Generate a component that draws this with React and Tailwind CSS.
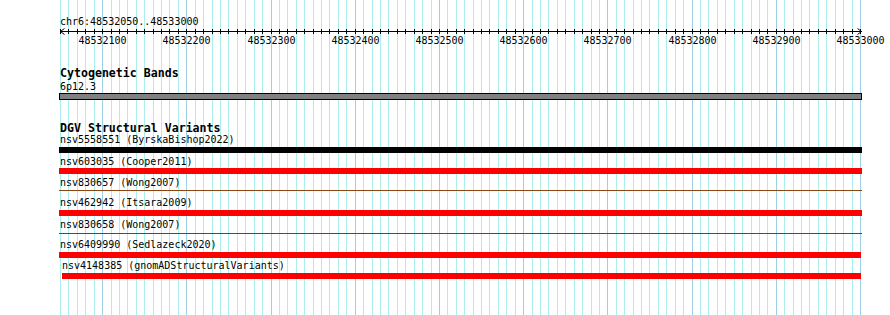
import React from 'react'

const START = 48532050
const END = 48533000
const LEFT = 60
const SPAN = 800

const toX = (pos) => LEFT + ((pos - START) * SPAN) / (END - START)

// every 10 bp a grid line, every 100 bp a major one
const ticks = []
for (let p = START; p <= END; p += 10) {
    ticks.push({ pos: p, x: Math.round(toX(p)), major: p % 100 === 0 })
}
const labels = ticks.filter((t) => t.major && t.pos !== START)

const variants = [
    {
        name: 'nsv5558551 (ByrskaBishop2022)',
        text: 'pl-[60px]',
        bar: 'mt-[1px] mb-[2px] h-[6px] ml-[59px] w-[803px] bg-black',
    },
    {
        name: 'nsv603035 (Cooper2011)',
        text: 'pl-[60px]',
        bar: 'mt-0 mb-[2px] h-[6px] ml-[59px] w-[803px] bg-[#ff0000]',
    },
    {
        name: 'nsv830657 (Wong2007)',
        text: 'pl-[60px]',
        bar: 'mt-[1px] mb-[5px] h-[1px] ml-[59px] w-[803px] bg-[#8b4513]',
    },
    {
        name: 'nsv462942 (Itsara2009)',
        text: 'pl-[60px]',
        bar: 'mt-[1px] mb-[2px] h-[6px] ml-[59px] w-[803px] bg-[#ff0000]',
    },
    {
        name: 'nsv830658 (Wong2007)',
        text: 'pl-[60px]',
        bar: 'mt-[2px] mb-[4px] h-[1px] ml-[59px] w-[803px] bg-[#ff0000]',
    },
    {
        name: 'nsv6409990 (Sedlazeck2020)',
        text: 'pl-[60px]',
        bar: 'mt-[1px] mb-[1px] h-[6px] ml-[59px] w-[802px] bg-[#ff0000]',
    },
    {
        name: 'nsv4148385 (gnomADStructuralVariants)',
        text: 'pl-[62px]',
        bar: 'mt-[1px] mb-0 h-[6px] ml-[62px] w-[799px] bg-[#ff0000]',
    },
]

function Grid() {
    return (
        <svg className="absolute inset-0" width="890" height="315" shapeRendering="crispEdges">
            {ticks.map((t) => (
                <line
                    key={t.pos}
                    x1={t.x + 0.5}
                    x2={t.x + 0.5}
                    y1="0"
                    y2="315"
                    stroke={t.major ? '#9fcfe6' : '#aaeeee'}
                    strokeWidth="1"
                />
            ))}
        </svg>
    )
}

function Ruler() {
    return (
        <svg width="890" height="20" className="block" shapeRendering="crispEdges">
            <line x1={LEFT} x2={LEFT + 802} y1="3.5" y2="3.5" stroke="#000" />
            {ticks.map((t) => (
                <line key={t.pos} x1={t.x + 0.5} x2={t.x + 0.5} y1="1" y2="6" stroke="#000" />
            ))}
            <polyline points="64.5,0.5 60.5,3.5 64.5,6.5" fill="none" stroke="#000" shapeRendering="auto" />
            <polyline points="857.5,0.5 861.5,3.5 857.5,6.5" fill="none" stroke="#000" shapeRendering="auto" />
            {labels.map((t) => (
                <text
                    key={t.pos}
                    x={t.x + 0.5}
                    y="16"
                    textAnchor="middle"
                    fontSize="10"
                    fontFamily="'DejaVu Sans Mono', monospace"
                    fill="#000"
                >
                    {t.pos}
                </text>
            ))}
        </svg>
    )
}

export default function App() {
    return (
        <div className="relative w-[890px] h-[315px] bg-white overflow-hidden font-['DejaVu_Sans_Mono',monospace] text-black">
            <Grid />
            <div className="relative flex flex-col pt-[15px]">
                <div className="h-[13px] pl-[60px] text-[10px] leading-[13px] whitespace-pre">
                    chr6:48532050..48533000
                </div>
                <Ruler />

                <div className="mt-[18px] h-[14px] pl-[60px] text-[11.6px] leading-[14px] font-bold whitespace-pre">
                    Cytogenetic Bands
                </div>
                <div className="h-[13px] pl-[60px] text-[10px] leading-[13px]">6p12.3</div>
                <div className="h-[7px] ml-[59px] w-[803px] border border-black bg-[#808080]" />

                <div className="mt-[22px] h-[11px] pl-[60px] text-[11.6px] leading-[12px] font-bold whitespace-pre">
                    DGV Structural Variants
                </div>
                {variants.map((v) => (
                    <div key={v.name} className="flex flex-col">
                        <div className={`h-[13px] text-[10px] leading-[13px] whitespace-pre ${v.text}`}>{v.name}</div>
                        <div className={v.bar} />
                    </div>
                ))}
            </div>
        </div>
    )
}
